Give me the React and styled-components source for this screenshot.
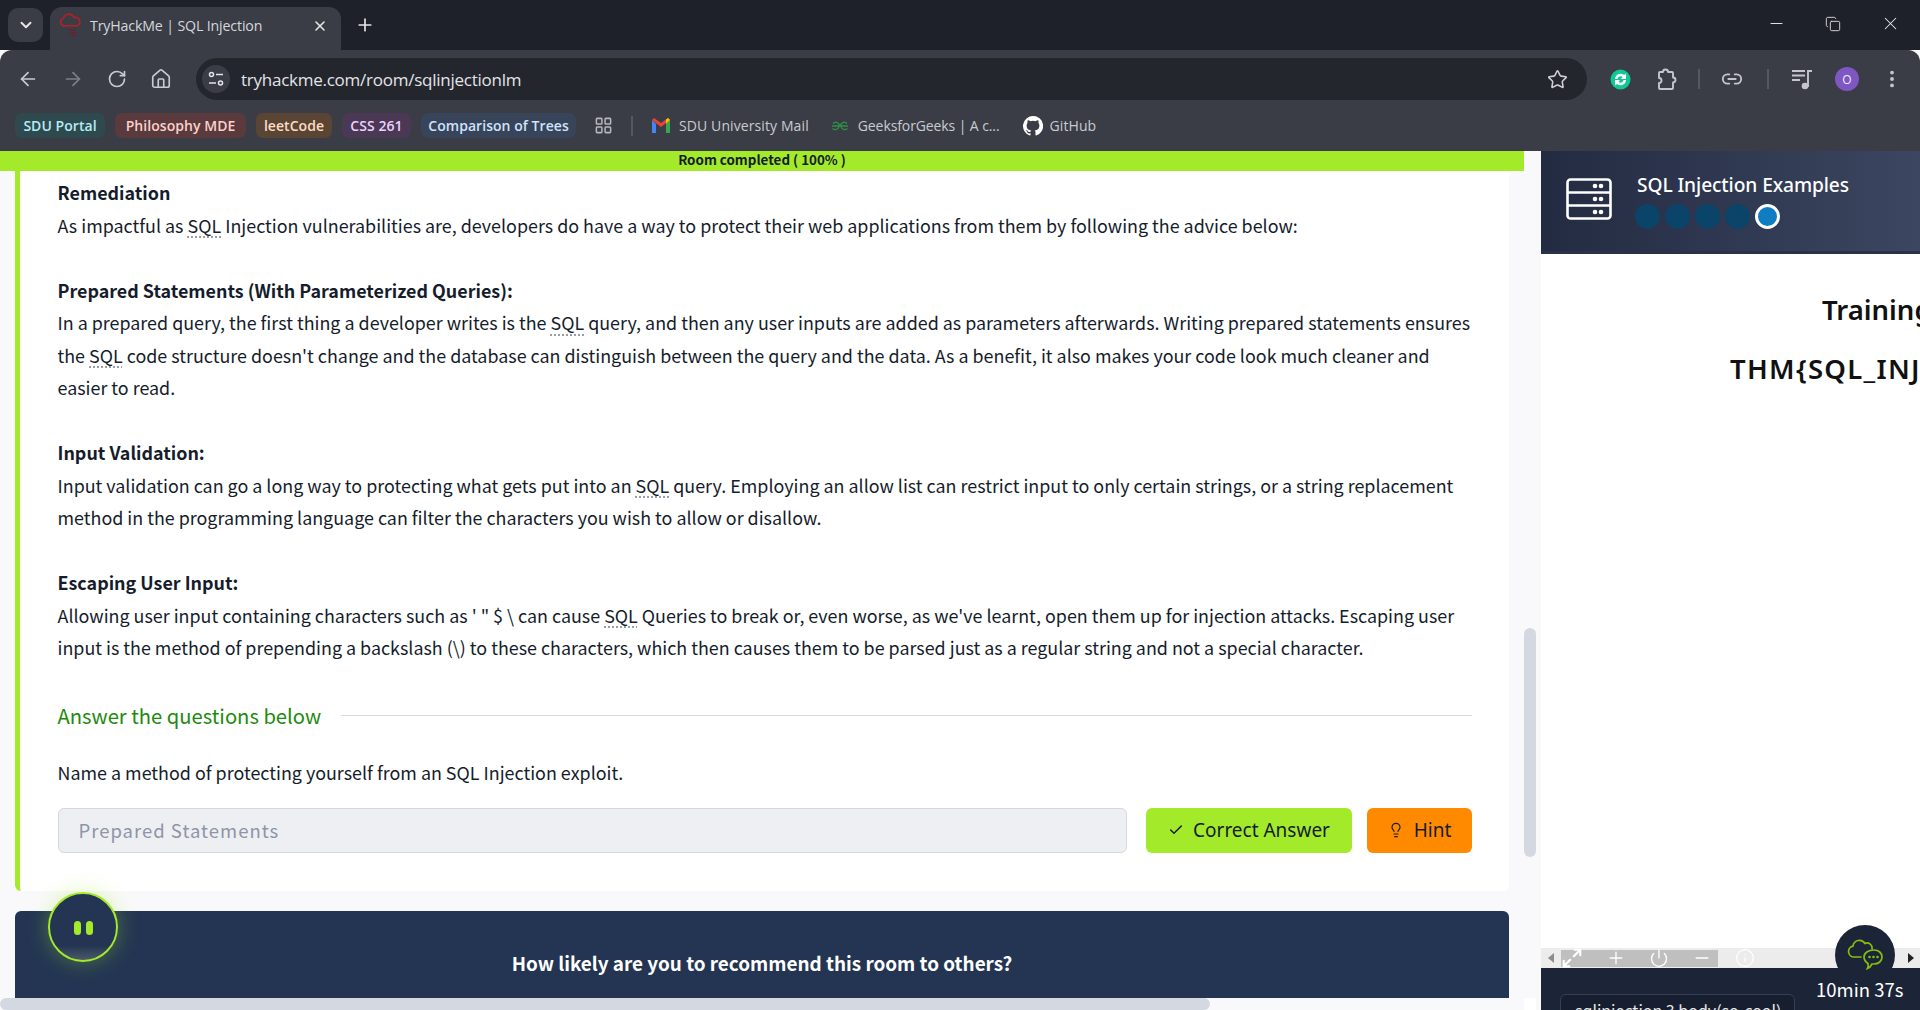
import React from "react";
import styled, { createGlobalStyle } from "styled-components";
import { ChevronDown, X, Plus, ArrowLeft, ArrowRight, RotateCw, Home, Star, Link2, MoreVertical, LayoutGrid, Check, Lightbulb, Minus, Copy, Power, Info, Maximize2 } from "lucide-react";

const Global = createGlobalStyle`
  html, body { margin: 0; padding: 0; overflow: hidden; background: #f9f9fb; }
  * { box-sizing: border-box; }
`;
const SANS = `"Noto Sans CJK SC", "Noto Sans", sans-serif`;
const UI = `"Open Sans", "Noto Sans", sans-serif`;
const TITLE = `"Noto Sans", sans-serif`;

const Shell = styled.div`width:1920px;height:1010px;display:flex;flex-direction:column;overflow:hidden;font-family:${SANS};`;
const TabStrip = styled.div`height:50px;flex:none;background:#1e2129;display:flex;align-items:flex-end;padding-left:8px;`;
const TabMenu = styled.div`width:35px;height:34px;margin-bottom:8px;border-radius:10px;background:#3a3d46;color:#e6e6e6;display:flex;align-items:center;justify-content:center;`;
const Tab = styled.div`width:291px;height:43px;margin-left:7px;border-radius:12px 12px 0 0;background:#3a3d46;display:flex;align-items:center;padding:0 0 6px 9px;color:#d5d7dc;`;
const TabTitle = styled.span`font:14.2px ${UI};letter-spacing:-.15px;margin-left:9px;width:222px;white-space:nowrap;`;
const NewTab = styled.div`margin:0 0 15px 14px;color:#e6e6e6;display:flex;`;
const WindowControls = styled.div`margin:0 19px 16px auto;display:flex;gap:39px;color:#e9e9e9;align-items:center;`;
const ToolArea = styled.div`height:101px;flex:none;background:#3a3d46;border-radius:12px 12px 0 0;display:flex;flex-direction:column;`;
const NavRow = styled.div`height:50px;padding-top:8px;display:flex;align-items:flex-start;`;
const NavIcons = styled.div`width:196px;height:42px;padding-left:17px;display:flex;gap:23px;align-items:center;color:#c9cbd0;`;
const Dim = styled.span`display:flex;color:#7d7f86;`;
const UrlBar = styled.div`width:1391px;height:42px;border-radius:21px;background:#24262e;display:flex;align-items:center;padding:0 19px 0 6px;`;
const SiteInfo = styled.div`width:28px;height:28px;border-radius:50%;background:#3a3d46;display:flex;align-items:center;justify-content:center;`;
const UrlText = styled.span`margin-left:11px;font:17px ${UI};letter-spacing:-.25px;color:#e3e4e7;white-space:nowrap;`;
const UrlEnd = styled.span`margin-left:auto;display:flex;color:#d0d0d4;`;
const ExtIcons = styled.div`flex:1;height:42px;display:flex;align-items:center;padding-left:23px;color:#c4c6cb;`;
const ExtSlot = styled.span`width:${p=>p.$w}px;display:flex;flex:none;align-items:center;`;
const Sep = styled.span`width:2px;height:20px;background:#55585f;flex:none;`;
const Avatar = styled.span`width:24px;height:24px;border-radius:50%;background:#7e57c2;color:#f0eaff;font:12px ${UI};display:flex;align-items:center;justify-content:center;`;
const Bookmarks = styled.div`height:51px;display:flex;align-items:center;padding:0 0 0 15px;`;
const Chip = styled.span`height:25px;margin-right:10px;border-radius:7px;background:${p=>p.$bg};color:${p=>p.$fg};font:600 14px ${UI};letter-spacing:.05px;display:flex;align-items:center;white-space:nowrap;justify-content:center;width:${p=>p.$w}px;`;
const GridSlot = styled.span`display:flex;margin:0 18px 0 8px;color:#b6b8bd;`;
const BarSep = styled.span`width:2px;height:20px;background:#55585f;margin-right:19px;`;
const Bookmark = styled.span`display:flex;align-items:center;gap:${p=>p.$gap||9}px;font:14px ${UI};letter-spacing:${p=>p.$ls??.1}px;color:#c9cbd0;margin-right:${p=>p.$mr||0}px;white-space:nowrap;`;

const Page = styled.div`flex:1;display:flex;min-height:0;`;
const LeftColumn = styled.div`width:1541px;flex:none;display:flex;flex-direction:column;background:#f9f9fb;`;
const ScrollArea = styled.div`flex:1;display:flex;min-height:0;`;
const Main = styled.div`width:1524px;flex:none;display:flex;flex-direction:column;position:relative;`;
const Progress = styled.div`height:20px;flex:none;background:#a3ea2a;color:#151c2b;font-weight:700;font-size:13.4px;line-height:17px;text-align:center;`;
const Card = styled.div`margin-left:15px;width:1494px;height:720px;flex:none;background:#fff;border-left:5px solid #a3ea2a;border-radius:0 0 6px 6px;padding:5px 37px 0 37.5px;color:#151c2b;`;
const Prose = styled.div`font-size:17.9px;line-height:32.5px;white-space:nowrap;color:#151c2b;`;
const Abbr = styled.span`text-decoration:underline dotted #9a9da5 2px;text-underline-offset:4px;`;
const B = styled.strong`font-weight:700;`;
const AnswerHead = styled.div`margin-top:36px;height:32px;display:flex;align-items:center;gap:20px;color:#218a0c;font-size:20.2px;`;
const Rule = styled.span`flex:1;height:1px;background:#d8d8d8;`;
const Question = styled.div`margin-top:24px;font-size:17.9px;line-height:32px;height:32px;`;
const AnswerRow = styled.div`margin-top:20px;display:flex;height:45px;`;
const AnswerInput = styled.div`width:1069.5px;border:1px solid #d3d7e0;border-radius:6px;background:#eeeff3;color:#8d95a6;font-size:18.5px;letter-spacing:1px;padding-left:20px;display:flex;align-items:center;`;
const Btn = styled.div`margin-left:${p=>p.$ml}px;width:${p=>p.$w}px;background:${p=>p.$bg};border-radius:6px;color:#151c2b;font:19px ${TITLE};display:flex;align-items:center;justify-content:center;gap:${p=>p.$gap}px;`;
const Banner = styled.div`margin:20px 0 0 15px;width:1494px;height:87px;flex:none;border-radius:6px 6px 0 0;background:#233553;color:#fff;font-weight:700;font-size:18.9px;display:flex;justify-content:center;padding-top:36px;line-height:32px;`;
const Pause = styled.div`position:absolute;left:48px;top:741px;width:70px;height:70px;border-radius:50%;border:2.5px solid #a3ea2a;background:linear-gradient(#233553 78%,#4b5a68);box-shadow:0 0 22px rgba(163,234,42,.35);display:flex;align-items:flex-start;justify-content:center;gap:5px;padding-top:27px;`;
const PauseBar = styled.span`width:7px;height:14px;border-radius:4px;background:#a3ea2a;`;
const VTrack = styled.div`flex:1;padding-top:477px;`;
const VThumb = styled.div`width:12px;height:229px;border-radius:6px;background:#d4d8e0;`;
const HTrack = styled.div`height:12px;flex:none;display:flex;background:#f9f9fb;`;
const HThumb = styled.div`width:1210px;border-radius:6px;background:#d4d8e0;`;
const Corner = styled.div`margin-left:314px;width:12px;background:#fff;`;

const Right = styled.div`flex:1;display:flex;flex-direction:column;position:relative;background:#fff;overflow:hidden;`;
const TaskHead = styled.div`height:103px;flex:none;background:linear-gradient(90deg,#232b42,#3c4660);border-bottom:3px solid #2b3147;display:flex;padding:27px 0 0 25px;`;
const TaskInfo = styled.div`margin-left:25px;margin-top:-9px;`;
const TaskTitle = styled.div`font:500 19.2px/32px ${TITLE};color:#fff;letter-spacing:-.1px;white-space:nowrap;`;
const Dots = styled.div`display:flex;gap:5px;margin:3px 0 0 -2px;`;
const Dot = styled.span`width:25px;height:25px;border-radius:50%;background:${p=>p.$on?"#0f7dbf":"#0a4468"};border:${p=>p.$on?"3px solid #fff":"none"};`;
const Viewport = styled.div`flex:1;overflow:hidden;padding-top:26px;color:#111;font:600 27.5px/59px ${TITLE};white-space:nowrap;`;
const Shifted = styled.div`padding-left:${p=>p.$x}px;letter-spacing:${p=>p.$ls||0}px;`;
const HBar = styled.div`height:20px;flex:none;background:#ececec;display:flex;align-items:center;padding-left:7px;color:#8c8c8c;`;
const Arrow = styled.span`width:0;height:0;border:5px solid transparent;border-left-width:0;border-right:6px solid #8c8c8c;`;
const ArrowR = styled.span`width:0;height:0;margin-left:auto;margin-right:6px;border:5px solid transparent;border-right-width:0;border-left:6px solid #222;`;
const Console = styled.div`width:157px;height:17px;margin-left:7px;background:#bfbfbf;display:flex;align-items:center;justify-content:space-between;padding:0 6px 0 0;color:#fff;`;
const InfoIcon = styled.span`margin-left:17px;display:flex;color:#fff;`;
const Footer = styled.div`height:42px;flex:none;background:#1c2538;display:flex;padding-left:19px;color:#fff;`;
const TermBox = styled.div`margin-top:26px;width:235px;height:30px;border:1px solid #363f53;border-radius:6px 6px 0 0;background:#171e30;color:#e8e8e8;font-size:16px;line-height:22px;padding:4px 0 0 14px;white-space:nowrap;overflow:hidden;`;
const Timer = styled.div`margin-left:21px;margin-top:7px;font-size:18.5px;line-height:28px;white-space:nowrap;`;
const ChatBubble = styled.div`position:absolute;right:25px;top:774px;width:60px;height:60px;border-radius:50%;background:#1c2538;display:flex;align-items:center;justify-content:center;`;

const ServerIcon = () => (
  <svg width="46" height="42" viewBox="0 0 46 42" fill="none" stroke="#fff" strokeWidth="2.6">
    <rect x="1.5" y="1.5" width="43" height="39" rx="3"/>
    <path d="M1.5 14.5h43M1.5 27.5h43"/>
    <g fill="#fff" stroke="none"><circle cx="29" cy="8" r="2.3"/><circle cx="35" cy="8" r="2.3"/><circle cx="29" cy="21" r="2.3"/><circle cx="35" cy="21" r="2.3"/><circle cx="29" cy="34" r="2.3"/><circle cx="35" cy="34" r="2.3"/></g>
  </svg>
);
const Favicon = () => (
  <svg width="22" height="28" viewBox="0 0 22 28" fill="none">
    <path d="M5 14a4 4 0 0 1-.5-7.8A5.6 5.6 0 0 1 15 5.5a4.3 4.3 0 0 1 3 8.3H5z" stroke="#b3202a" strokeWidth="1.6"/>
    <path d="M9 18h8M11 21h7M13 24h4" stroke="#5a2a32" strokeWidth="1.8"/>
  </svg>
);
const Tune = () => (
  <svg width="16" height="16" viewBox="0 0 16 16" fill="none" stroke="#e3e4e7" strokeWidth="1.5">
    <circle cx="3.5" cy="3.5" r="2"/><path d="M8 3.5h7M1 12h7"/><circle cx="12.5" cy="12" r="2"/>
  </svg>
);
const Gmail = () => (
  <svg width="18" height="15" viewBox="0 0 18 15">
    <path d="M0 2v13h4V6z" fill="#4285f4"/><path d="M14 6v9h4V2z" fill="#34a853"/>
    <path d="M0 2l9 7 9-7-2-2-7 5-7-5z" fill="#ea4335"/><path d="M14 6l4-4-2-2-2 1.5z" fill="#fbbc04"/>
  </svg>
);
const Gfg = () => (
  <svg width="18" height="10" viewBox="0 0 18 10" fill="none" stroke="#2f8d46" strokeWidth="1.4">
    <path d="M1 5h7.5A3.7 3.7 0 0 0 2 2.6M1.6 7.4A3.7 3.7 0 0 0 8 5"/>
    <path d="M17 5H9.5A3.7 3.7 0 0 1 16 2.6M16.4 7.4A3.7 3.7 0 0 1 10 5"/>
  </svg>
);
const GitHub = () => (
  <svg width="20" height="20" viewBox="0 0 16 16" fill="#fff">
    <path d="M8 0a8 8 0 0 0-2.53 15.59c.4.07.55-.17.55-.38v-1.34c-2.23.48-2.7-1.07-2.7-1.07-.36-.93-.89-1.17-.89-1.17-.73-.5.05-.49.05-.49.8.06 1.23.83 1.23.83.71 1.22 1.87.87 2.33.66.07-.52.28-.87.5-1.07-1.78-.2-3.64-.89-3.64-3.95 0-.87.31-1.59.82-2.15-.08-.2-.36-1.02.08-2.12 0 0 .67-.22 2.2.82a7.6 7.6 0 0 1 4 0c1.53-1.04 2.2-.82 2.2-.82.44 1.1.16 1.92.08 2.12.51.56.82 1.27.82 2.15 0 3.07-1.87 3.75-3.65 3.95.29.25.54.73.54 1.48v2.2c0 .21.15.46.55.38A8 8 0 0 0 8 0z"/>
  </svg>
);
const SyncBadge = () => (
  <svg width="21" height="21" viewBox="0 0 21 21">
    <circle cx="10.5" cy="10.5" r="10" fill="#0fc894"/>
    <path d="M5 10a5.500 5.500 0 0 1 9-4l2-1.500V10h-5l1.500-2a3 3 0 0 0-5 2z" fill="#fff"/>
    <path d="M16 11a5.500 5.500 0 0 1-9 4l-2 1.500V11h5l-1.500 2a3 3 0 0 0 5-2z" fill="#fff"/>
  </svg>
);
const PuzzleIcon = () => (
  <svg width="24" height="24" viewBox="0 0 24 24" fill="none" stroke="currentColor" strokeWidth="1.9" strokeLinejoin="round">
    <path d="M9 5a2.500 2.500 0 0 1 5 0h4a1 1 0 0 1 1 1v4.500a2.500 2.500 0 0 1 0 5V21a1 1 0 0 1-1 1H6a1 1 0 0 1-1-1v-5a2.500 2.500 0 0 0 0-5V6a1 1 0 0 1 1-1z"/>
  </svg>
);
const MusicList = () => (
  <svg width="22" height="22" viewBox="0 0 22 22" fill="none" stroke="currentColor" strokeWidth="1.9">
    <path d="M1 3h13M1 7.500h13M1 12h8M17 19V3h4"/>
    <circle cx="14" cy="18" r="3.300" fill="currentColor" stroke="none"/>
  </svg>
);
const CloudChat = () => (
  <svg width="36" height="32" viewBox="0 0 36 32" fill="none" stroke="#86bd10" strokeWidth="1.7" strokeLinecap="round">
    <path d="M14 18H7a5.500 5.500 0 0 1-1-10.900A6.500 6.500 0 0 1 18 4.500a5 5 0 0 1 7 5.500"/>
    <path d="M27 11c4.700 0 8 3 8 7s-3.300 7-8 7h-2c-1 2-3 4-4.500 4.500.8-1.500.8-3.500.5-5C18.800 23 17 20.800 17 18c0-4 4.300-7 10-7z"/>
    <g fill="#86bd10" stroke="none"><circle cx="22.500" cy="18" r="1.300"/><circle cx="26.500" cy="18" r="1.300"/><circle cx="30.500" cy="18" r="1.300"/></g>
  </svg>
);

const SQL = () => <Abbr>SQL</Abbr>;

export default function App() {
  return (
    <Shell>
      <Global />
      <TabStrip>
        <TabMenu><ChevronDown size={18} strokeWidth={2.6} /></TabMenu>
        <Tab>
          <Favicon />
          <TabTitle>TryHackMe | SQL Injection</TabTitle>
          <X size={16} strokeWidth={2.4} color="#e6e6e6" />
        </Tab>
        <NewTab><Plus size={20} strokeWidth={2} /></NewTab>
        <WindowControls>
          <Minus size={19} strokeWidth={1.2} />
          <Copy size={16} strokeWidth={1.3} />
          <X size={21} strokeWidth={1.2} />
        </WindowControls>
      </TabStrip>
      <ToolArea>
        <NavRow>
          <NavIcons>
            <ArrowLeft size={22} strokeWidth={1.9} />
            <Dim><ArrowRight size={22} strokeWidth={1.9} /></Dim>
            <RotateCw size={20} strokeWidth={2} />
            <Home size={22} strokeWidth={1.8} />
          </NavIcons>
          <UrlBar>
            <SiteInfo><Tune /></SiteInfo>
            <UrlText>tryhackme.com/room/sqlinjectionlm</UrlText>
            <UrlEnd><Star size={21} strokeWidth={1.8} /></UrlEnd>
          </UrlBar>
          <ExtIcons>
            <ExtSlot $w={44}><SyncBadge /></ExtSlot>
            <ExtSlot $w={44}><PuzzleIcon /></ExtSlot>
            <Sep />
            <ExtSlot $w={21} />
            <ExtSlot $w={46}><Link2 size={22} strokeWidth={2} /></ExtSlot>
            <Sep />
            <ExtSlot $w={22} />
            <ExtSlot $w={44}><MusicList /></ExtSlot>
            <ExtSlot $w={46}><Avatar>O</Avatar></ExtSlot>
            <ExtSlot $w={22}><MoreVertical size={22} strokeWidth={2.2} /></ExtSlot>
          </ExtIcons>
        </NavRow>
        <Bookmarks>
          <Chip $w={90} $bg="#2f4a4e" $fg="#b5ecf6">SDU Portal</Chip>
          <Chip $w={131} $bg="#5a3a3c" $fg="#fcd0cc">Philosophy MDE</Chip>
          <Chip $w={76} $bg="#5a4534" $fg="#fddcc4">leetCode</Chip>
          <Chip $w={69} $bg="#4a3854" $fg="#ecd2fc">CSS 261</Chip>
          <Chip $w={155} $bg="#38445a" $fg="#cfe3fb">Comparison of Trees</Chip>
          <GridSlot><LayoutGrid size={19} strokeWidth={1.9} /></GridSlot>
          <BarSep />
          <Bookmark $mr={22}><Gmail />SDU University Mail</Bookmark>
          <Bookmark $mr={23} $ls={-.1}><Gfg />GeeksforGeeks | A c...</Bookmark>
          <Bookmark $gap={7}><GitHub />GitHub</Bookmark>
        </Bookmarks>
      </ToolArea>
      <Page>
        <LeftColumn>
          <ScrollArea>
            <Main>
              <Progress>Room completed ( 100% )</Progress>
              <Card>
                <Prose>
                  <B>Remediation</B><br />
                  As impactful as <SQL /> Injection vulnerabilities are, developers do have a way to protect their web applications from them by following the advice below:<br /><br />
                  <B>Prepared Statements (With Parameterized Queries):</B><br />
                  In a prepared query, the first thing a developer writes is the <SQL /> query, and then any user inputs are added as parameters afterwards. Writing prepared statements ensures<br />
                  the <SQL /> code structure doesn't change and the database can distinguish between the query and the data. As a benefit, it also makes your code look much cleaner and<br />
                  easier to read.<br /><br />
                  <B>Input Validation:</B><br />
                  Input validation can go a long way to protecting what gets put into an <SQL /> query. Employing an allow list can restrict input to only certain strings, or a string replacement<br />
                  method in the programming language can filter the characters you wish to allow or disallow.<br /><br />
                  <B>Escaping User Input:</B><br />
                  Allowing user input containing characters such as ' " $ \ can cause <SQL /> Queries to break or, even worse, as we've learnt, open them up for injection attacks. Escaping user<br />
                  input is the method of prepending a backslash (\) to these characters, which then causes them to be parsed just as a regular string and not a special character.
                </Prose>
                <AnswerHead>Answer the questions below<Rule /></AnswerHead>
                <Question>Name a method of protecting yourself from an SQL Injection exploit.</Question>
                <AnswerRow>
                  <AnswerInput>Prepared Statements</AnswerInput>
                  <Btn $ml={19} $w={206} $bg="#a3ea2a" $gap={9}><Check size={16} strokeWidth={2.2} />Correct Answer</Btn>
                  <Btn $ml={15} $w={105} $bg="#ff8a00" $gap={10}><Lightbulb size={16} strokeWidth={1.8} />Hint</Btn>
                </AnswerRow>
              </Card>
              <Banner>How likely are you to recommend this room to others?</Banner>
              <Pause><PauseBar /><PauseBar /></Pause>
            </Main>
            <VTrack><VThumb /></VTrack>
          </ScrollArea>
          <HTrack><HThumb /><Corner /></HTrack>
        </LeftColumn>
        <Right>
          <TaskHead>
            <ServerIcon />
            <TaskInfo>
              <TaskTitle>SQL Injection Examples</TaskTitle>
              <Dots><Dot /><Dot /><Dot /><Dot /><Dot $on /></Dots>
            </TaskInfo>
          </TaskHead>
          <Viewport>
            <Shifted $x={281}>Training Complete</Shifted>
            <Shifted $x={189} $ls={1.3}>THM{"{"}SQL_INJECTION_MASTER{"}"}</Shifted>
          </Viewport>
          <HBar>
            <Arrow />
            <Console>
              <Maximize2 size={22} strokeWidth={2.4} />
              <Plus size={20} strokeWidth={1.6} />
              <Power size={20} strokeWidth={1.6} />
              <Minus size={20} strokeWidth={1.8} />
            </Console>
            <InfoIcon><Info size={20} strokeWidth={1.5} /></InfoIcon>
            <ArrowR />
          </HBar>
          <Footer>
            <TermBox>sqlinjection 3 body(so-cool)</TermBox>
            <Timer>10min 37s</Timer>
          </Footer>
          <ChatBubble><CloudChat /></ChatBubble>
        </Right>
      </Page>
    </Shell>
  );
}
